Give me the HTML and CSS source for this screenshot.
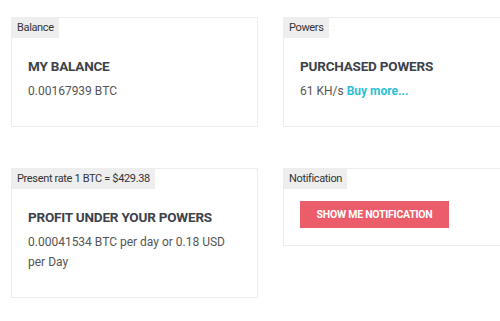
FILE: index.html
```html
<!DOCTYPE html>
<html lang="en">
<head>
<meta charset="utf-8">
<title>Dashboard</title>
<link rel="stylesheet" href="styles.css">
</head>
<body>
<main class="grid">
  <section class="card">
    <div class="tag">Balance</div>
    <div class="card-body">
      <h2 class="title">MY BALANCE</h2>
      <p class="text">0.00167939 BTC</p>
    </div>
  </section>
  <section class="card">
    <div class="tag">Powers</div>
    <div class="card-body">
      <h2 class="title">PURCHASED POWERS</h2>
      <p class="text">61 KH/s <a class="link" href="#">Buy more...</a></p>
    </div>
  </section>
  <section class="card">
    <div class="tag">Present rate 1 BTC = $429.38</div>
    <div class="card-body">
      <h2 class="title">PROFIT UNDER YOUR POWERS</h2>
      <p class="text">0.00041534 BTC per day or 0.18 USD per Day</p>
    </div>
  </section>
  <section class="card">
    <div class="tag">Notification</div>
    <div class="card-body card-body-button">
      <button class="btn" type="button">SHOW ME NOTIFICATION</button>
    </div>
  </section>
</main>
</body>
</html>
```

FILE: styles.css
```css
html, body {
  margin: 0;
  padding: 0;
  background: #ffffff;
  overflow: hidden;
}

body {
  font-family: Roboto, "Liberation Sans", Arial, sans-serif;
  color: #555555;
}

.grid {
  display: grid;
  grid-template-columns: 247px 247px;
  column-gap: 25px;
  row-gap: 41px;
  align-items: start;
  padding: 17px 0 0 11px;
  width: max-content;
}

.card {
  border: 1px solid #ededed;
  background: #ffffff;
}

.tag {
  display: inline-block;
  vertical-align: top;
  background: #eeeeee;
  color: #333333;
  font-size: 11px;
  letter-spacing: -0.35px;
  line-height: 20px;
  padding: 0 5px;
}

.card-body {
  padding: 20px 16px 25px;
}

.card-body-button {
  padding: 12px 16px 17px;
}

.title {
  margin: 0;
  font-size: 13.5px;
  letter-spacing: -0.2px;
  line-height: 16px;
  font-weight: 700;
  color: #3d4149;
}

.text {
  margin: 7px 0 0;
  font-size: 12px;
  line-height: 20px;
  color: #555555;
}

.link {
  color: #2cbfd5;
  font-weight: 700;
  text-decoration: none;
}

.btn {
  display: block;
  width: 149px;
  height: 27px;
  padding: 0;
  border: 0;
  background: #eb5d6a;
  color: #ffffff;
  font-family: Roboto, "Liberation Sans", Arial, sans-serif;
  font-size: 10.5px;
  letter-spacing: -0.25px;
  font-weight: 700;
  cursor: pointer;
}
```
